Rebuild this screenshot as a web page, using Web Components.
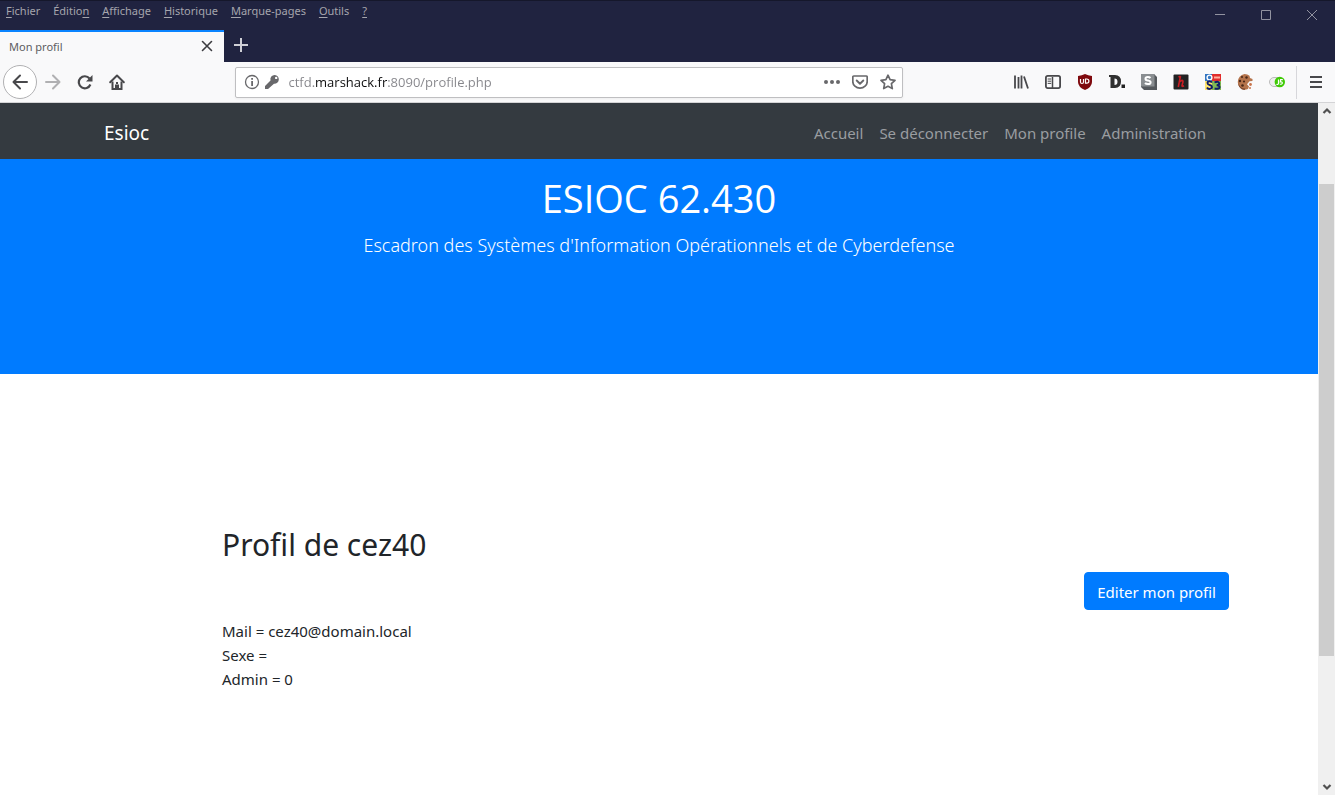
<!DOCTYPE html>
<html lang="fr">
<head>
<meta charset="utf-8">
<meta name="viewport" content="width=device-width, initial-scale=1">
<title>Mon profil</title>
<style>
  body { margin: 0; font-family: "Noto Sans", "Open Sans", sans-serif; }
</style>
</head>
<body>
<browser-window>
  <menu-bar slot="menu"></menu-bar>
  <tab-strip slot="tabs" label="Mon profil"></tab-strip>
  <nav-toolbar slot="toolbar"></nav-toolbar>
  <site-page>
    <site-nav slot="nav"></site-nav>
    <site-hero slot="hero">
      <span slot="title">ESIOC 62.430</span>
      <span slot="lead">Escadron des Systèmes d'Information Opérationnels et de Cyberdefense</span>
    </site-hero>
    <user-profile>
      <span slot="title">Profil de cez40</span>
      <div>Mail = cez40@domain.local</div>
      <div>Sexe =</div>
      <div>Admin = 0</div>
    </user-profile>
  </site-page>
  <scroll-bar slot="scroll"></scroll-bar>
</browser-window>

<script>
const define = (name, html) => customElements.define(name, class extends HTMLElement {
  constructor() {
    super();
    const t = document.createElement('template');
    t.innerHTML = '<style>:host,*{box-sizing:border-box}</style>' + html;
    this.attachShadow({ mode: 'open' }).append(t.content.cloneNode(true));
    this.shadowRoot.querySelectorAll('[data-attr]').forEach(e => {
      e.textContent = this.getAttribute(e.dataset.attr);
    });
  }
});

const icons = {
  back: '<path d="M15 8H2M8 1.500 1.500 8 8 14.500" fill="none" stroke="currentColor" stroke-width="2" stroke-linecap="round" stroke-linejoin="round"/>',
  forward: '<path d="M1 8h13M8 1.500 14.500 8 8 14.500" fill="none" stroke="currentColor" stroke-width="2" stroke-linecap="round" stroke-linejoin="round"/>',
  reload: '<path d="M13.400 10.500A6 6 0 1 1 12.500 4.500" fill="none" stroke="currentColor" stroke-width="2.200"/><path d="M15.500 1v6.500H9z" fill="currentColor"/>',
  home: '<path d="M1.200 8.200 8 1.500l6.800 6.700" fill="none" stroke="currentColor" stroke-width="2" stroke-linecap="round" stroke-linejoin="round"/><path d="M3.500 7.500V15H7v-3.500h2V15h3.500V7.500" fill="none" stroke="currentColor" stroke-width="2"/><path d="M7 8h2v2H7z" fill="currentColor"/>',
  info: '<circle cx="8" cy="8" r="6.500" fill="none" stroke="currentColor" stroke-width="1.300"/><path d="M7.200 7h1.800v5H7.200zM7.200 4h1.800v1.800H7.200z" fill="currentColor"/>',
  key: '<path d="M10.800 1a4.300 4.300 0 0 0-4.300 5.400L1 12v3h3l6-5.200A4.400 4.400 0 1 0 10.800 1zm1.400 1.700a1.200 1.200 0 1 1 0 2.400 1.200 1.200 0 0 1 0-2.400z" fill="currentColor"/>',
  dots: '<g fill="currentColor"><circle cx="2" cy="8" r="2"/><circle cx="8" cy="8" r="2"/><circle cx="14" cy="8" r="2"/></g>',
  pocket: '<path d="M1.800 2h12.400q1 0 1 1v4.500a7.200 6.700 0 0 1-14.400 0V3q0-1 1-1z" fill="none" stroke="currentColor" stroke-width="1.700"/><path d="m4.700 6.500 3.300 3.200 3.300-3.200" fill="none" stroke="currentColor" stroke-width="1.900" stroke-linecap="round" stroke-linejoin="round"/>',
  star: '<path d="m8 1.200 2.100 4.400 4.900.7-3.600 3.400.9 4.900L8 12.300l-4.300 2.300.9-4.900L1 6.300l4.900-.7z" fill="none" stroke="currentColor" stroke-width="1.700" stroke-linejoin="round"/>',
  library: '<path d="M2 1.500v13M5.500 3v11.500M8.500 1.500v13M11 2.500l4 12" fill="none" stroke="currentColor" stroke-width="1.800"/>',
  sidebar: '<rect x=".9" y="1.900" width="14.200" height="12.200" rx="1.800" fill="none" stroke="currentColor" stroke-width="1.800"/><path d="M7.500 3v11" stroke="currentColor" stroke-width="1.500"/><path d="M2.700 5h3.500M2.700 7.200h3.500M2.700 9.400h3.500" stroke="currentColor"/>',
  shield: '<path d="M8 0q3 1.700 7 2v6q0 5-7 8-7-3-7-8V2q4-.3 7-2z" fill="#7f0a0e"/><path d="M3.500 5v3q0 1.500 1.500 1.500T6.500 8V5M8.500 5v4.200h1.300a2 2 0 0 0 0-4.200z" fill="none" stroke="#fff" stroke-width="1.200"/>',
  disc: '<path d="M1.500 1H6q6 0 6 6.500T6 14H1.500zM5.500 4.500v6.500q3 0 3-3.200T5.500 4.500z" fill="#303030" fill-rule="evenodd"/><path d="M0 1h5v2H0z" fill="#303030"/><rect x="12.500" y="10.500" width="3.500" height="3.500" fill="#222"/>',
  stylus: '<path d="M0 0h13l3 3v13H3l-3-3z" fill="#55595d"/><path d="M0 0h13.500v12.500H0z" fill="#8a8e91"/><path d="M9.500 4Q8.500 3 6.800 3 4.500 3 4.500 4.700t2.400 1.900Q9.600 7 9.600 8.500t-2.700 1.600Q5 10.100 4 9" fill="none" stroke="#fff" stroke-width="2"/>',
  habit: '<rect x=".5" y=".5" width="15" height="15" rx="1" fill="#222"/><path d="M7.500 2 5.300 13M6 8.500q4-4 4-.5L9 11.500q-.2 1.500 2 .3M5.500 3l2-.8" fill="none" stroke="#c91d22" stroke-width="1.600"/>',
  s3: '<path d="M0 0h7v7H0z" fill="#3476c2"/><path d="M7 0h9v7H7z" fill="#e12d2c"/><path d="M0 7h7v9H0z" fill="#ffe56a"/><path d="M7 7h9v9H7z" fill="#81ba52"/><circle cx="4.500" cy="3.500" r="2.400" fill="#3476c2" stroke="#fff" stroke-width="1.400"/><path d="M9 3.500h6" stroke="#ffb0a0" stroke-width="2"/><path d="M7 8.500Q6 7.300 4.300 7.300T2.500 9q0 1.500 2.200 2T7 13t-2 1.900T2 13.500M9.500 8.300q4.700-1.500 4.700 1.200 0 1.700-2.600 1.700 3 0 3 2t-5 1.300" fill="none" stroke="#101c69" stroke-width="1.900"/>',
  cookie: '<path d="M7.500 0q3 0 5 1.700L13 4l2.500 1v2l-3 .2-2.500 3 2 2.300-1 2.500q-1.500.8-3.500.8A8 8 0 0 1 7.500 0z" fill="#b5744c"/><path d="M1 9q2 5.500 7.500 5.500L7.500 16Q2 15.500 1 9z" fill="#7e472c"/><g fill="#482718"><circle cx="5" cy="3" r="1"/><circle cx="9.500" cy="3.500" r="1.200"/><circle cx="3" cy="7" r="1.200"/><circle cx="7" cy="7.500" r="1.100"/><circle cx="5.500" cy="11.500" r="1.300"/></g><g fill="#c9754c"><circle cx="13.500" cy="10.500" r="1.400"/><circle cx="13" cy="14" r="1"/></g>',
  js: '<rect x=".5" y="3.500" width="14" height="9" rx="4.500" fill="#eee" stroke="#bbb"/><circle cx="10.800" cy="8" r="5.200" fill="#3fca05"/><path d="M9.500 5.500v4q-.5 1.500-2 .7M13.800 5.700h-2.200L11.300 8q2-.4 2 1t-2.500 1.200" fill="none" stroke="#fff" stroke-width="1.200"/>',
  menu: '<path d="M2 3h12M2 8h12M2 13h12" stroke="currentColor" stroke-width="2"/>',
  close: '<path d="m3.500 3.500 9 9m0-9-9 9" stroke="currentColor" stroke-width="1.600" stroke-linecap="round"/>',
  plus: '<path d="M8 1v14M1 8h14" stroke="currentColor" stroke-width="2"/>',
  wmin: '<path d="M3 7.500h10" stroke="currentColor"/>',
  wmax: '<path d="M3.500 3.500h9v9h-9z" fill="none" stroke="currentColor"/>',
  wclose: '<path d="m3 3 10 10m0-10L3 13" stroke="currentColor"/>',
  up: '<path d="m4.500 10 3.500-3.500 3.500 3.500" fill="none" stroke="currentColor" stroke-width="2.200"/>',
  down: '<path d="m4.500 6 3.500 3.500L11.500 6" fill="none" stroke="currentColor" stroke-width="2.200"/>'
};

customElements.define('ui-icon', class extends HTMLElement {
  constructor() {
    super();
    this.attachShadow({ mode: 'open' }).innerHTML =
      `<style>:host{display:block;width:16px;height:16px;flex:none}svg{display:block}</style>
       <svg width="16" height="16" viewBox="0 0 16 16" aria-hidden="true">${icons[this.getAttribute('name')]}</svg>`;
  }
});

customElements.define('icon-button', class extends HTMLElement {
  constructor() {
    super();
    this.attachShadow({ mode: 'open' }).innerHTML =
      `<style>
        :host{display:block;flex:none;width:32px;height:32px}
        button{display:flex;align-items:center;justify-content:center;width:100%;height:100%;box-sizing:border-box;
          margin:0;padding:0;border:var(--ring,0);border-radius:50%;background:var(--fill,none);color:inherit}
      </style>
      <button type="button" aria-label="${this.getAttribute('label')}"><ui-icon name="${this.getAttribute('icon')}"></ui-icon></button>`;
  }
});

define('browser-window', `
  <style>
    :host{display:flex;flex-direction:column;min-height:100vh;background:#fff}
    .top{background:#202340;border-top:1px solid #15172b}
    .body{flex:1;display:flex;align-items:stretch}
    .page{flex:1;min-width:0}
  </style>
  <header class="top"><slot name="menu"></slot><slot name="tabs"></slot></header>
  <slot name="toolbar"></slot>
  <div class="body"><div class="page"><slot></slot></div><slot name="scroll"></slot></div>`);

define('menu-bar', `
  <style>
    :host{display:flex;justify-content:space-between;height:29px;color:#a5a5ad;font-size:11px;line-height:20px}
    nav{display:flex;gap:13px;padding-left:6px}
    a{color:inherit;text-decoration:none}
    u{text-underline-offset:2px}
    .win{display:flex;color:#9293a0}
    .win icon-button{width:46px;height:28px}
  </style>
  <nav aria-label="Menu">
    <a href="#"><u>F</u>ichier</a><a href="#">Éditio<u>n</u></a><a href="#"><u>A</u>ffichage</a><a href="#"><u>H</u>istorique</a><a href="#"><u>M</u>arque-pages</a><a href="#"><u>O</u>utils</a><a href="#"><u>?</u></a>
  </nav>
  <div class="win">
    <icon-button icon="wmin" label="Réduire"></icon-button><icon-button icon="wmax" label="Agrandir"></icon-button><icon-button icon="wclose" label="Fermer"></icon-button>
  </div>`);

define('tab-strip', `
  <style>
    :host{display:flex;height:32px}
    .tab{display:flex;align-items:center;justify-content:space-between;width:224px;padding:0 1px 2px 9px;
      border-top:2px solid #0a84ff;background:#f9f9fa;color:#5c5c61;font-size:11px}
    .tab icon-button{height:28px;color:#3c3c40}
    .new{height:30px;margin-left:1px;color:#cfcfd6}
  </style>
  <div class="tab"><span data-attr="label"></span><icon-button icon="close" label="Fermer l’onglet"></icon-button></div>
  <icon-button class="new" icon="plus" label="Nouvel onglet"></icon-button>`);

define('nav-toolbar', `
  <style>
    :host{display:flex;align-items:center;height:41px;background:#f9f9fa;border-bottom:1px solid #d4d4d6;color:#48484b}
    .left{display:flex;align-items:center;padding-left:3px}
    .back{width:34px;height:34px;--ring:1px solid #b1b1b3;--fill:#fff}
    .off{color:#b0b0b2}
    .gap{flex:102}
    .url{flex:652;display:flex;align-items:center;height:31px;padding:0 2px 0 8px;gap:4px;border:1px solid #bfbfc1;
      border-radius:2px;background:#fff;color:#68686b;box-shadow:0 1px 3px #0000000d}
    .url icon-button{width:24px;height:28px}
    input{flex:1;min-width:0;height:28px;margin-left:4px;padding:0;border:0;outline:0;
      font:13px "Open Sans","Noto Sans",sans-serif;color:#85858a;-webkit-text-fill-color:transparent;
      background:linear-gradient(90deg,#85858a 27px,#0c0c0d 27px 99px,#85858a 99px);
      -webkit-background-clip:text;background-clip:text}
    .right{display:flex;align-items:center;padding-right:3px}
    .sep{width:1px;height:33px;margin:0 3px;background:#d7d7db}
  </style>
  <div class="left">
    <icon-button class="back" icon="back" label="Précédent"></icon-button><icon-button class="off" icon="forward" label="Suivant"></icon-button><icon-button icon="reload" label="Actualiser"></icon-button><icon-button icon="home" label="Accueil"></icon-button>
  </div>
  <div class="gap"></div>
  <div class="url">
    <ui-icon name="info"></ui-icon><ui-icon name="key"></ui-icon>
    <input type="text" aria-label="Adresse" value="ctfd.marshack.fr:8090/profile.php" spellcheck="false">
    <icon-button icon="dots" label="Actions"></icon-button><icon-button icon="pocket" label="Pocket"></icon-button><icon-button icon="star" label="Marquer cette page"></icon-button>
  </div>
  <div class="gap"></div>
  <div class="right">
    <icon-button icon="library" label="Bibliothèque"></icon-button><icon-button icon="sidebar" label="Panneaux latéraux"></icon-button><icon-button icon="shield" label="Bloqueur"></icon-button><icon-button icon="disc" label="Technologies"></icon-button><icon-button icon="stylus" label="Styles"></icon-button><icon-button icon="habit" label="HackBar"></icon-button><icon-button icon="s3" label="Traducteur"></icon-button><icon-button icon="cookie" label="Cookies"></icon-button><icon-button icon="js" label="JavaScript"></icon-button>
    <span class="sep"></span>
    <icon-button icon="menu" label="Ouvrir le menu"></icon-button>
  </div>`);

define('site-page', `
  <style>:host{display:block;background:#fff;color:#212529}</style>
  <slot name="nav"></slot><slot name="hero"></slot><main><slot></slot></main>`);

define('site-nav', `
  <style>
    :host{display:block;background:#343a40}
    nav{display:flex;align-items:center;justify-content:space-between;max-width:1140px;height:56px;margin:0 auto;padding:3px 15px 0}
    a{color:#fff;text-decoration:none}
    .brand{font-size:19px}
    ul{display:flex;margin:0;padding:0;list-style:none}
    li{padding:0 8px}
    li a{color:#9a9da0;font-size:15px}
  </style>
  <nav aria-label="Site"><a class="brand" href="#">Esioc</a>
    <ul><li><a href="#">Accueil</a></li><li><a href="#">Se déconnecter</a></li><li><a href="#">Mon profile</a></li><li><a href="#">Administration</a></li></ul>
  </nav>`);

define('site-hero', `
  <style>
    :host{display:block;height:215px;padding-top:15px;background:#007bff;color:#fff;text-align:center}
    h1{margin:0 0 8px;font:400 38px/48px "Open Sans",sans-serif}
    p{margin:0;font-size:18px;line-height:30px;font-weight:300}
  </style>
  <h1><slot name="title"></slot></h1><p><slot name="lead"></slot></p>`);

define('user-profile', `
  <style>
    :host{display:block;max-width:1140px;margin:0 auto;padding:152px 0 80px;font-size:15px;line-height:24px}
    h2{margin:0 0 8px 133px;font-size:30px;line-height:38px;font-weight:400}
    .actions{display:flex;justify-content:flex-end;margin-bottom:9px}
    button{height:38px;padding:2px 12px 0;border:1px solid #007bff;border-radius:4px;background:#007bff;color:#fff;font:inherit}
    .data{margin-left:133px}
  </style>
  <section><h2><slot name="title"></slot></h2>
  <div class="actions"><button type="button">Editer mon profil</button></div>
  <div class="data"><slot></slot></div></section>`);

define('scroll-bar', `
  <style>
    :host{display:flex;flex-direction:column;align-items:center;flex:none;width:17px;background:#f0f0f0;color:#505050}
    .before{flex:65}.thumb{flex:472;width:15px;background:#cdcdcd}.after{flex:123}
  </style>
  <ui-icon name="up"></ui-icon><div class="before"></div><div class="thumb"></div><div class="after"></div><ui-icon name="down"></ui-icon>`);
</script>
</body>
</html>
